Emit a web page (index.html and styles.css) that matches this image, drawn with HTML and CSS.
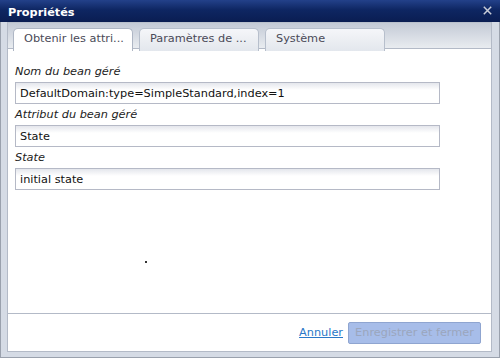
FILE: index.html
```html
<!DOCTYPE html>
<html lang="fr">

<head>
    <meta charset="UTF-8">
    <meta name="viewport" content="width=device-width, initial-scale=1.0">
    <title>Propriétés</title>
    <link rel="stylesheet" href="styles.css">
</head>

<body>
    <div class="dialog">
        <div class="titlebar">
            <span class="title">Propriétés</span>
            <span class="close">
                <svg width="9" height="9" viewBox="0 0 9 9">
                    <path d="M0.8 0.8 L8.2 8.2 M8.2 0.8 L0.8 8.2" stroke="#c9cdd8" stroke-width="1.5" fill="none" />
                </svg>
            </span>
        </div>
        <div class="frame">
            <div class="box">
                <div class="tabs">
                    <div class="tab active">Obtenir les attri...</div>
                    <div class="tab">Paramètres de ...</div>
                    <div class="tab">Système</div>
                </div>
                <div class="panel">
                    <div class="label">Nom du bean géré</div>
                    <div class="field">DefaultDomain:type=SimpleStandard,index=1</div>
                    <div class="label">Attribut du bean géré</div>
                    <div class="field">State</div>
                    <div class="label">State</div>
                    <div class="field">initial state</div>
                    <span class="dot"></span>
                </div>
                <div class="footer">
                    <a class="cancel" href="#">Annuler</a>
                    <button class="save" disabled>Enregistrer et fermer</button>
                </div>
            </div>
        </div>
    </div>
</body>

</html>
```

FILE: styles.css
```css
body {
    margin: 0;
    background: #fff;
    font-family: "DejaVu Sans", Verdana, sans-serif;
    font-size: 11.3px;
}

.dialog {
    width: 500px;
    height: 358px;
    box-sizing: border-box;
    border: 1px solid #9aa1ad;
    border-top: none;
    display: flex;
    flex-direction: column;
}

.titlebar {
    height: 22px;
    margin: 0 -1px;
    box-sizing: border-box;
    padding: 3px 8px 0 8px;
    line-height: 19px;
    background: linear-gradient(#23418a, #0e2662 45%, #0a1d52);
    display: flex;
    justify-content: space-between;
}

.title {
    color: #fff;
    font-weight: bold;
}

.close {
    padding-top: 3px;
    line-height: 0;
}

.frame {
    flex: 1;
    background: #d5dbe5;
    padding: 0 7px 5px 6px;
    display: flex;
    flex-direction: column;
}

.box {
    flex: 1;
    border: 1px solid #b3bac7;
    border-top: none;
    background: #fff;
    display: flex;
    flex-direction: column;
}

.tabs {
    height: 27px;
    box-sizing: border-box;
    padding: 5px 0 0 5px;
    display: flex;
    gap: 6px;
    background: linear-gradient(#c3cad6, #e9ecf0);
    border-top: 1px solid #b9c0cc;
    border-bottom: 1px solid #b3bac7;
}

.tab {
    width: 120px;
    height: 23px;
    box-sizing: border-box;
    padding-left: 10px;
    line-height: 19px;
    color: #4a4a58;
    border: 1px solid #b7bfcc;
    border-bottom: none;
    border-radius: 5px 5px 0 0;
    background: linear-gradient(#f5f6f9, #e3e7ed);
    white-space: nowrap;
}

.tab.active {
    background: #fff;
    border-color: #aeb6c4;
    position: relative;
    z-index: 1;
}

.panel {
    position: relative;
    flex: 1;
    padding: 12px 7px 0 7px;
    border-bottom: 1px solid #b3bac7;
}

.label {
    height: 21px;
    box-sizing: border-box;
    padding-top: 1px;
    line-height: 20px;
    font-style: italic;
    color: #222;
}

.field {
    width: 425px;
    height: 22px;
    box-sizing: border-box;
    padding: 1px 4px 0 4px;
    line-height: 20px;
    color: #111;
    border: 1px solid #b5b9c6;
    background: linear-gradient(#e4e6ec, #fff 7px);
    white-space: nowrap;
    overflow: hidden;
}

.dot {
    position: absolute;
    left: 137px;
    top: 212px;
    width: 2px;
    height: 2px;
    background: #333;
}

.footer {
    height: 37px;
    display: flex;
    justify-content: flex-end;
    align-items: center;
    gap: 5px;
    padding-right: 10px;
}

.cancel {
    color: #2a78c8;
    text-decoration: underline;
}

.save {
    width: 133px;
    height: 22px;
    padding: 0;
    font-family: inherit;
    font-size: 11.3px;
    color: #9ba6bd;
    background: #a7bde9;
    border: 1px solid #8fa5d0;
    border-radius: 2px;
}
```
